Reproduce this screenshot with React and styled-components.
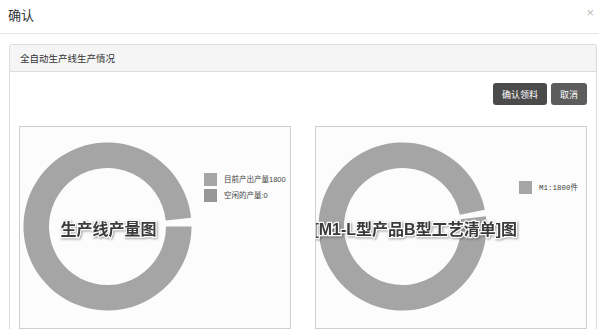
import React from "react";
import styled, {createGlobalStyle} from "styled-components";

const FONT = `"Liberation Sans", "Noto Sans CJK SC", sans-serif`;

const polar = (cx, cy, rad, deg) => {
    const a = (deg * Math.PI) / 180;
    return [cx + rad * Math.cos(a), cy + rad * Math.sin(a)];
};

// ring slice, angles in degrees, clockwise from 3 o'clock
const ringPath = (cx, cy, R, r, from, to) => {
    const large = to - from > 180 ? 1 : 0;
    const [x1, y1] = polar(cx, cy, R, from);
    const [x2, y2] = polar(cx, cy, R, to);
    const [x3, y3] = polar(cx, cy, r, to);
    const [x4, y4] = polar(cx, cy, r, from);
    return `M${x1} ${y1} A${R} ${R} 0 ${large} 1 ${x2} ${y2} L${x3} ${y3} A${r} ${r} 0 ${large} 0 ${x4} ${y4} Z`;
};

const charts = [
    {
        title: "生产线产量图",
        cx: 87.5,
        titleX: 88.5,
        anchor: "middle",
        from: 0,
        to: 354,
        legendX: 184,
        legendY: 46,
        mono: false,
        legend: [
            {label: "目前产出产量1800", color: "#a5a5a5"},
            {label: "空闲的产量:0", color: "#969696"},
        ],
    },
    {
        title: "[M1-L型产品B型工艺清单]图",
        cx: 86.5,
        titleX: 201,
        anchor: "end",
        from: -7,
        to: 348.5,
        legendX: 203,
        legendY: 54,
        mono: true,
        legend: [{label: "M1:1800件", color: "#a5a5a5"}],
    },
];

const DonutChart = ({chart}) => {
    const cy = 99.5;
    return (
        <ChartBox>
            <svg width="270" height="201" viewBox="0 0 270 201">
                <path d={ringPath(chart.cx, cy, 84, 58.5, chart.from, chart.to)} fill="#a5a5a5"/>
                <ChartTitle x={chart.titleX} y={cy + 8} textAnchor={chart.anchor}>
                    {chart.title}
                </ChartTitle>
                {chart.legend.map((item, i) => (
                    <g key={i}>
                        <rect
                            x={chart.legendX}
                            y={chart.legendY + i * 16}
                            width="13"
                            height="13"
                            fill={item.color}
                        />
                        <LegendText
                            $mono={chart.mono}
                            x={chart.legendX + 20}
                            y={chart.legendY + i * 16 + 9}
                        >
                            {item.label}
                        </LegendText>
                    </g>
                ))}
            </svg>
        </ChartBox>
    );
};

const App = () => {
    return (
        <>
            <GlobalStyle/>
            <Modal>
                <Header>
                    <Title>确认</Title>
                    <Close>×</Close>
                </Header>
                <Body>
                    <Panel>
                        <PanelHeading>全自动生产线生产情况</PanelHeading>
                        <PanelBody>
                            <Toolbar>
                                <Btn $bg="#4b4b4b">确认领料</Btn>
                                <Btn $bg="#5c5c5c">取消</Btn>
                            </Toolbar>
                            <ChartRow>
                                {charts.map((c, i) => (
                                    <DonutChart key={i} chart={c}/>
                                ))}
                            </ChartRow>
                        </PanelBody>
                    </Panel>
                </Body>
            </Modal>
        </>
    );
};

const GlobalStyle = createGlobalStyle`
  body {
    margin: 0;
    background: #fff;
    font-family: ${FONT};
    color: #333;
  }
`;

const Modal = styled.div`
  width: 599px;
  height: 335px;
  overflow: hidden;
  background: #fff;
`;

const Header = styled.div`
  height: 33px;
  padding: 0 5px 0 8px;
  display: flex;
  align-items: center;
  justify-content: space-between;
  border-bottom: 1px solid #e5e5e5;
`;

const Title = styled.div`
  font-size: 13px;
  color: #333;
  margin-top: -4px;
`;

const Close = styled.div`
  font-size: 13px;
  color: #bdbdbd;
  margin-top: -9px;
`;

const Body = styled.div`
  padding: 10px 2px 0 9px;
`;

const Panel = styled.div`
  border: 1px solid #dcdcdc;
  border-bottom: none;
  border-radius: 3px 3px 0 0;
`;

const PanelHeading = styled.div`
  height: 26px;
  padding: 0 10px;
  display: flex;
  align-items: center;
  background: #f5f5f5;
  border-bottom: 1px solid #dcdcdc;
  font-size: 9.5px;
  color: #333;
`;

const PanelBody = styled.div`
  padding: 11px 9px 0 9px;
`;

const Toolbar = styled.div`
  display: flex;
  justify-content: flex-end;
  gap: 4px;
`;

const Btn = styled.button`
  height: 22px;
  padding: 0 9px;
  border: none;
  border-radius: 3px;
  background: ${p => p.$bg};
  color: #fff;
  font-family: ${FONT};
  font-size: 9px;
  cursor: pointer;
`;

const ChartRow = styled.div`
  margin-top: 21px;
  display: flex;
  gap: 24px;
`;

const ChartBox = styled.div`
  width: 270px;
  height: 201px;
  border: 1px solid #cfcfcf;
  background: #fcfcfc;
  overflow: hidden;

  svg {
    display: block;
  }
`;

const ChartTitle = styled.text`
  font-family: ${FONT};
  font-size: 16px;
  font-weight: bold;
  fill: #3a3a3a;
  stroke: #fcfcfc;
  stroke-width: 2.5px;
  paint-order: stroke;
  filter: drop-shadow(1px 1px 1px rgba(0, 0, 0, 0.35));
`;

const LegendText = styled.text`
  font-family: ${p => (p.$mono ? `"Liberation Mono", "Noto Sans CJK SC", monospace` : FONT)};
  font-size: 7.5px;
  fill: #444;
`;

export default App;
